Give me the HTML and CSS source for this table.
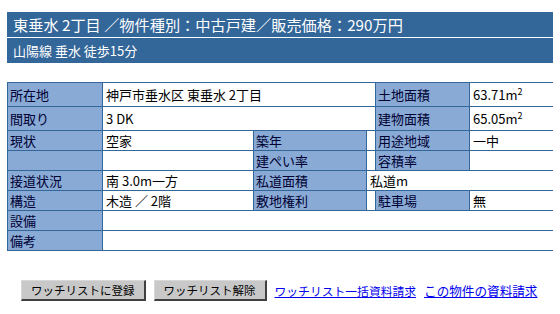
FILE: index.html
```html
<!DOCTYPE html>
<html lang="ja">

<head>
    <meta charset="utf-8">
    <title>東垂水 2丁目 中古戸建</title>
    <link rel="stylesheet" href="styles.css">
</head>

<body>
    <header class="bukken_head">
        <h1 class="titel">東垂水 2丁目 ／物件種別：中古戸建／販売価格：290万円</h1>
        <p class="eki">山陽線 垂水 徒歩15分</p>
    </header>

    <table class="gaiyou">
        <colgroup>
            <col class="c1">
            <col class="c2">
            <col class="c3">
            <col class="c4">
            <col class="c5">
            <col class="c6">
        </colgroup>
        <tr class="takai">
            <th>所在地</th>
            <td colspan="3">神戸市垂水区 東垂水 2丁目</td>
            <th>土地面積</th>
            <td>63.71m<sup>2</sup></td>
        </tr>
        <tr class="takai">
            <th>間取り</th>
            <td colspan="3">3 DK</td>
            <th>建物面積</th>
            <td>65.05m<sup>2</sup></td>
        </tr>
        <tr>
            <th>現状</th>
            <td>空家</td>
            <th>築年</th>
            <td></td>
            <th>用途地域</th>
            <td>一中</td>
        </tr>
        <tr>
            <th></th>
            <td></td>
            <th>建ぺい率</th>
            <td></td>
            <th>容積率</th>
            <td></td>
        </tr>
        <tr>
            <th>接道状況</th>
            <td>南 3.0m一方</td>
            <th>私道面積</th>
            <td colspan="3">私道m</td>
        </tr>
        <tr>
            <th>構造</th>
            <td>木造 ／ 2階</td>
            <th>敷地権利</th>
            <td></td>
            <th>駐車場</th>
            <td>無</td>
        </tr>
        <tr>
            <th>設備</th>
            <td colspan="5"></td>
        </tr>
        <tr>
            <th>備考</th>
            <td colspan="5"></td>
        </tr>
    </table>

    <div class="knapper">
        <button class="watch">ワッチリストに登録</button>
        <button class="watch">ワッチリスト解除</button>
        <a href="#" class="link">ワッチリスト一括資料請求</a>
        <a href="#" class="link">この物件の資料請求</a>
    </div>
</body>

</html>
```

FILE: styles.css
```css
body {
    margin: 12px 7px;
    font-family: "Noto Sans CJK JP", "DejaVu Sans", sans-serif;
    background: #fff;
    color: #000;
}

.bukken_head {
    background: #336699;
    color: #fff;
}

.titel {
    margin: 0;
    padding: 0 6px;
    height: 25px;
    line-height: 25px;
    font-size: 15.2px;
    font-weight: normal;
    border-bottom: 1px solid #fff;
}

.eki {
    margin: 0;
    padding: 0 6px;
    height: 25px;
    line-height: 25px;
    font-size: 13px;
}

.gaiyou {
    width: 546px;
    margin-top: 19px;
    border-collapse: collapse;
    table-layout: fixed;
    font-size: 13px;
}

.c1 { width: 95px; }
.c2 { width: 151px; }
.c3 { width: 113px; }
.c4 { width: 9px; }
.c5 { width: 94px; }
.c6 { width: 84px; }

.gaiyou th,
.gaiyou td {
    border: 1px solid #336699;
    height: 19px;
    padding: 0 2px;
    line-height: 18px;
    text-align: left;
    font-weight: normal;
    white-space: nowrap;
    overflow: hidden;
}

.gaiyou th {
    background: #88aad5;
    color: #000033;
}

.gaiyou td {
    padding-left: 3px;
}

.gaiyou .takai th,
.gaiyou .takai td {
    height: 23px;
}

sup {
    font-size: 9px;
    line-height: 0;
}

.knapper {
    margin-top: 29px;
    padding-left: 14px;
    display: flex;
    align-items: center;
    white-space: nowrap;
}

.watch {
    flex-shrink: 0;
    font-family: "Noto Sans CJK JP", sans-serif;
    font-size: 11.5px;
    background: #c8c8c8;
    color: #000;
    border: 1px solid #d8d8d8;
    border-right: 2px solid #404040;
    border-bottom: 2px solid #404040;
    padding: 0 9px;
    height: 21px;
    line-height: 18px;
    margin-right: 8px;
}

.link {
    flex-shrink: 0;
    color: #0000ee;
    font-size: 11.8px;
    margin-right: 8px;
}

.link:last-child {
    font-size: 12.6px;
}
```
